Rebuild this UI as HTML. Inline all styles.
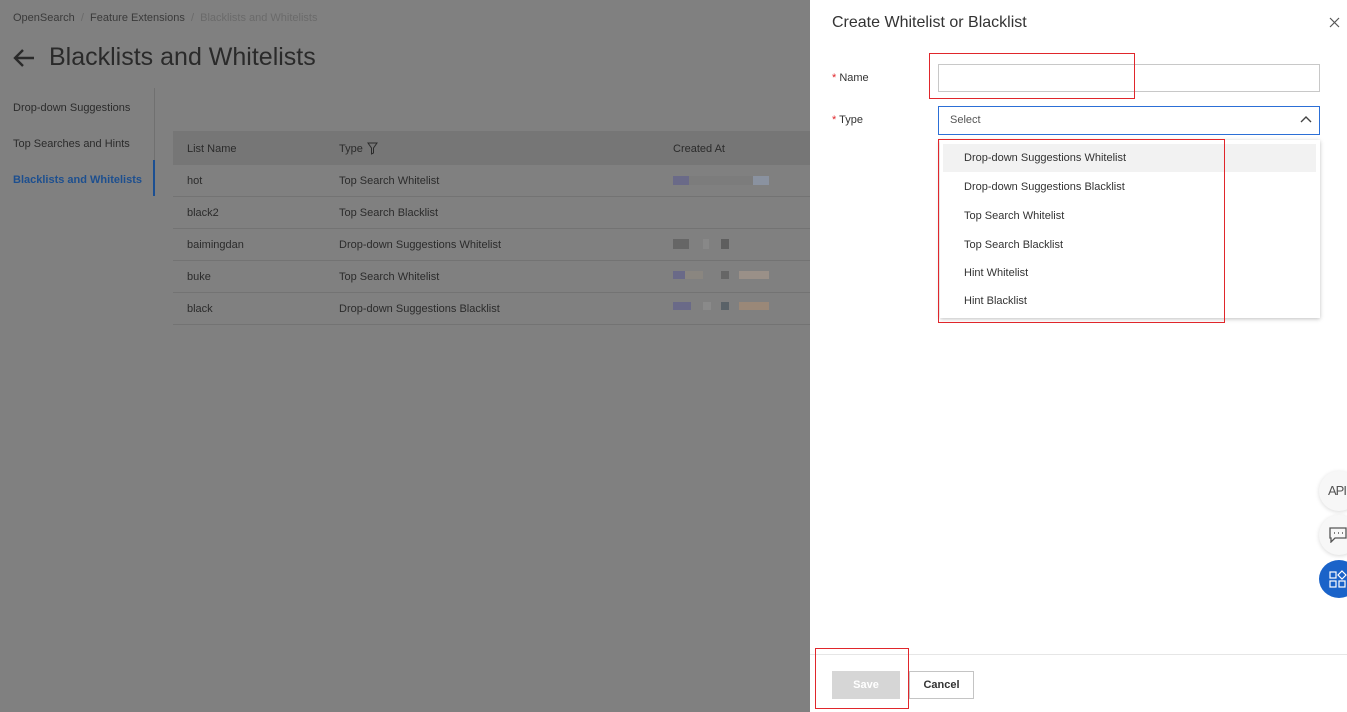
<!DOCTYPE html>
<html><head><style>
*{box-sizing:border-box;margin:0;padding:0}
body{width:1347px;height:712px;overflow:hidden;font-family:"Liberation Sans",sans-serif;background:#808080;position:relative;font-size:11px;color:#2b2b2b}
.a{position:absolute}
.bc{top:12px;left:13px;color:#3a3a3a;font-size:11px}
.row{position:absolute;left:173px;width:637px;height:32px;border-bottom:1px solid #737373}
.row span{position:absolute;top:10px}
.panel{left:810px;top:0;width:537px;height:712px;background:#fff}
.red{position:absolute;border:1.5px solid #e0262b}
.opt{position:absolute;left:964px;font-size:11px;color:#333}
</style></head><body>
<div class="a bc">OpenSearch <span style="color:#6a6a6a">&nbsp;/&nbsp;</span> Feature Extensions <span style="color:#6a6a6a">&nbsp;/&nbsp; Blacklists and Whitelists</span></div>
<svg class="a" style="left:12px;top:48px" width="24" height="20"><path d="M22 10H3M11 2L3 10L11 18" stroke="#2a2a2a" stroke-width="2.4" fill="none"/></svg>
<div class="a" style="left:49px;top:43px;font-size:25px;color:#2a2a2a">Blacklists and Whitelists</div>
<div class="a" style="left:154px;top:88px;width:1px;height:108px;background:#707070"></div>
<div class="a" style="left:153px;top:160px;width:2px;height:36px;background:#1b4f92"></div>
<div class="a" style="left:13px;top:102px">Drop-down Suggestions</div>
<div class="a" style="left:13px;top:138px">Top Searches and Hints</div>
<div class="a" style="left:13px;top:174px;color:#1d4f8f;font-weight:bold">Blacklists and Whitelists</div>
<div class="a" style="left:173px;top:131px;width:637px;height:34px;background:#767676"></div>
<div class="a" style="left:187px;top:143px">List Name</div>
<div class="a" style="left:339px;top:143px">Type</div>
<svg class="a" style="left:367px;top:142px" width="11" height="13"><path d="M1 1H10L6.5 6V11L4.5 12V6Z" stroke="#2b2b2b" stroke-width="1" fill="none"/></svg>
<div class="a" style="left:673px;top:143px">Created At</div>
<div class="row" style="top:165px"><span style="left:14px">hot</span><span style="left:166px">Top Search Whitelist</span></div>
<div class="row" style="top:197px"><span style="left:14px">black2</span><span style="left:166px">Top Search Blacklist</span></div>
<div class="row" style="top:229px"><span style="left:14px">baimingdan</span><span style="left:166px">Drop-down Suggestions Whitelist</span></div>
<div class="row" style="top:261px"><span style="left:14px">buke</span><span style="left:166px">Top Search Whitelist</span></div>
<div class="row" style="top:293px"><span style="left:14px">black</span><span style="left:166px">Drop-down Suggestions Blacklist</span></div>
<div class="a" style="left:673px;top:271px;width:96px;height:8px;background:linear-gradient(90deg,#6a6a88 0 12px,#8a8680 12px 30px,#808080 30px 48px,#666 48px 56px,#808080 56px 66px,#9a9088 66px 96px)"></div>
<div class="a" style="left:673px;top:302px;width:96px;height:8px;background:linear-gradient(90deg,#6a6a88 0 18px,#808080 18px 30px,#8a8a8a 30px 38px,#808080 38px 48px,#5a6268 48px 56px,#808080 56px 66px,#9a8878 66px 96px)"></div>
<div class="a" style="left:673px;top:239px;width:96px;height:10px;background:linear-gradient(90deg,#666 0 16px,#808080 16px 30px,#888 30px 36px,#808080 36px 48px,#5e5e5e 48px 56px,#808080 56px 96px)"></div>
<div class="a" style="left:673px;top:176px;width:96px;height:9px;background:linear-gradient(90deg,#6a6a88 0 16px,#7c7c7c 16px 80px,#8a92a0 80px 96px)"></div>

<div class="a panel"></div>
<div class="a" style="left:832px;top:14px;font-size:16px;color:#333">Create Whitelist or Blacklist</div>
<svg class="a" style="left:1329px;top:17px" width="11" height="11"><path d="M1 1L10 10M10 1L1 10" stroke="#555" stroke-width="1.2"/></svg>
<div class="a" style="left:832px;top:72px;font-size:11px;color:#333"><span style="color:#e0262b">*</span> Name</div>
<div class="a" style="left:938px;top:64px;width:382px;height:28px;border:1px solid #c8c8c8"></div>
<div class="a" style="left:832px;top:114px;font-size:11px;color:#333"><span style="color:#e0262b">*</span> Type</div>
<div class="a" style="left:938px;top:106px;width:382px;height:29px;border:1px solid #2c6fd6"></div>
<div class="a" style="left:950px;top:114px;color:#555">Select</div>
<svg class="a" style="left:1300px;top:115px" width="12" height="10"><path d="M1 7L6 2L11 7" stroke="#444" stroke-width="1.4" fill="none"/></svg>
<div class="a" style="left:940px;top:140px;width:380px;height:178px;background:#fff;box-shadow:0 1px 4px rgba(0,0,0,.25)"></div>
<div class="a" style="left:943px;top:144px;width:373px;height:28px;background:#f2f2f2"></div>
<div class="opt" style="top:152px">Drop-down Suggestions Whitelist</div>
<div class="opt" style="top:181px">Drop-down Suggestions Blacklist</div>
<div class="opt" style="top:210px">Top Search Whitelist</div>
<div class="opt" style="top:239px">Top Search Blacklist</div>
<div class="opt" style="top:267px">Hint Whitelist</div>
<div class="opt" style="top:295px">Hint Blacklist</div>
<div class="a" style="left:810px;top:654px;width:537px;height:1px;background:#e6e6e6"></div>
<div class="a" style="left:832px;top:671px;width:68px;height:28px;background:#d6d6d6;color:#fff;text-align:center;line-height:28px;font-weight:bold">Save</div>
<div class="a" style="left:909px;top:671px;width:65px;height:28px;border:1px solid #c4c4c4;text-align:center;line-height:26px;font-weight:bold;color:#333">Cancel</div>
<div class="a" style="left:1319px;top:471px;width:40px;height:40px;border-radius:50%;background:#f7f7f7;box-shadow:0 1px 4px rgba(0,0,0,.15)"><span style="position:absolute;left:9px;top:12px;font-size:13px;color:#555;font-family:'Liberation Sans Narrow','Liberation Sans',sans-serif;letter-spacing:-1px">API</span></div>
<div class="a" style="left:1319px;top:515px;width:40px;height:40px;border-radius:50%;background:#f7f7f7;box-shadow:0 1px 4px rgba(0,0,0,.15)"><svg style="position:absolute;left:10px;top:12px" width="18" height="16"><path d="M1 1H17V11H6L2 15V11H1Z" stroke="#555" stroke-width="1.3" fill="none"/><path d="M5 6h1M9 6h1M13 6h1" stroke="#555" stroke-width="1.5"/></svg></div>
<div class="a" style="left:1319px;top:560px;width:40px;height:38px;border-radius:50%;background:#1a63c9"><svg style="position:absolute;left:10px;top:10px" width="18" height="18"><g stroke="#fff" stroke-width="1.2" fill="none"><rect x="1" y="2" width="6" height="6"/><path d="M13 1L17 5L13 9L9 5Z"/><rect x="1" y="11" width="6" height="6"/><rect x="10" y="11" width="6" height="6"/></g></svg></div>
<div class="red" style="left:929px;top:53px;width:206px;height:46px"></div>
<div class="red" style="left:938px;top:139px;width:287px;height:184px"></div>
<div class="red" style="left:815px;top:648px;width:94px;height:61px"></div>
</body></html>
